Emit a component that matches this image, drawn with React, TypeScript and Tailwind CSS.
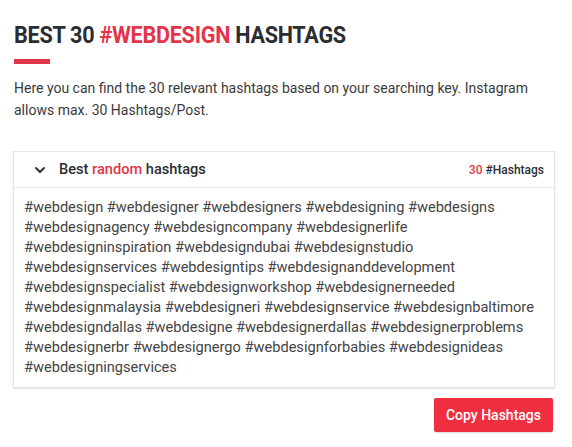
import { ChevronDown } from 'lucide-react';

const tags = [
  'webdesign', 'webdesigner', 'webdesigners', 'webdesigning', 'webdesigns',
  'webdesignagency', 'webdesigncompany', 'webdesignerlife',
  'webdesigninspiration', 'webdesigndubai', 'webdesignstudio',
  'webdesignservices', 'webdesigntips', 'webdesignanddevelopment',
  'webdesignspecialist', 'webdesignworkshop', 'webdesignerneeded',
  'webdesignmalaysia', 'webdesigneri', 'webdesignservice', 'webdesignbaltimore',
  'webdesigndallas', 'webdesigne', 'webdesignerdallas', 'webdesignerproblems',
  'webdesignerbr', 'webdesignergo', 'webdesignforbabies', 'webdesignideas',
  'webdesigningservices',
];

export default function App() {
  return (
    <div className="min-h-screen bg-white px-[14px] pt-[20px] font-['Roboto',sans-serif] text-[#333]">
      <h2 className="origin-left scale-x-[0.9] whitespace-nowrap text-[24px] font-bold uppercase leading-[30px] tracking-[-0.3px] text-[#2b2d33]">
        Best 30 <span className="text-[#e3354a]">#webdesign</span> Hashtags
      </h2>
      <div className="mt-[9px] h-[5px] w-[36px] bg-[#e3354a]" />
      <p className="mt-[13px] text-[14px] leading-[22px] text-[#3a3a3a]">
        Here you can find the 30 relevant hashtags based on your searching key. Instagram allows max. 30
        Hashtags/Post.
      </p>

      <div className="mt-[30px] mr-[3px] -ml-px border border-[#e6e6e6] shadow-[0_1px_2px_rgba(0,0,0,0.12)]">
        <div className="flex h-[36px] items-center border-b border-[#e6e6e6] pl-[18px] pr-[10px]">
          <ChevronDown className="h-[16px] w-[16px] text-[#333]" strokeWidth={3} />
          <span className="ml-[11px] text-[14.6px] font-medium text-[#2b2d33]">
            Best <span className="text-[#e3354a]">random</span> hashtags
          </span>
          <span className="ml-auto text-[12px] font-medium text-[#2b2d33]">
            <span className="text-[#e3354a]">30</span> #Hashtags
          </span>
        </div>
        <div className="px-[10px] pt-[9px] pb-[10px] text-[14.6px] leading-[20px] text-[#444]">
          {tags.map((t) => `#${t}`).join(' ')}
        </div>
      </div>

      <div className="mt-[10px] flex justify-end pr-[5px]">
        <button className="h-[34px] rounded-[2px] bg-[#ef2f3f] px-[12px] text-[14px] font-medium text-white shadow-[0_1px_2px_rgba(0,0,0,0.15)]">
          Copy Hashtags
        </button>
      </div>
    </div>
  );
}
